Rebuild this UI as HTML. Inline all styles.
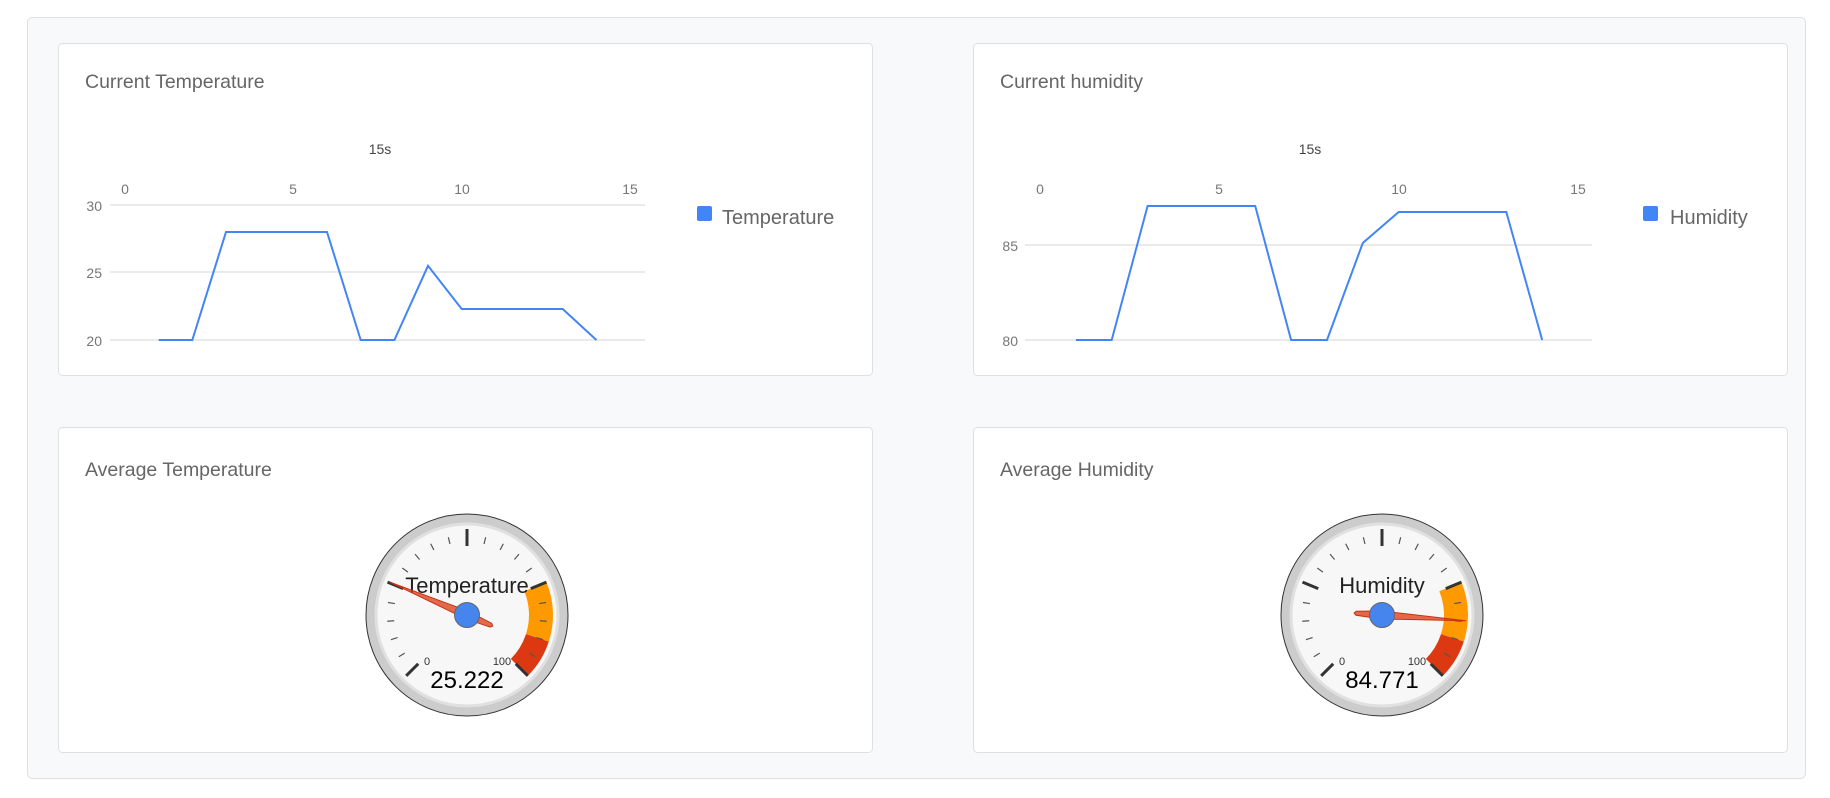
<!DOCTYPE html>
<html><head><meta charset="utf-8"><style>
html,body{margin:0;padding:0;background:#fff;width:1830px;height:798px;overflow:hidden}
svg text{font-family:"Liberation Sans",sans-serif}
</style></head><body>
<svg width="1830" height="798" viewBox="0 0 1830 798" xmlns="http://www.w3.org/2000/svg">
<defs>
<g id="gauge">
  <circle r="101" fill="#cccccc" stroke="#333" stroke-width="1"/>
  <circle r="91" fill="#f7f7f7" stroke="#e0e0e0" stroke-width="3"/>
  <path d="M79.45,-32.91 A86,86 0 0 1 81.79,26.57 L58.97,19.16 A62,62 0 0 0 57.28,-23.73 Z" fill="#ff9900"/>
  <path d="M81.79,26.57 A86,86 0 0 1 60.81,60.81 L43.84,43.84 A62,62 0 0 0 58.97,19.16 Z" fill="#dc3912"/>
  <g stroke="#333" stroke-width="3">
    <line y1="-86" y2="-69" transform="rotate(-135)"/>
    <line y1="-86" y2="-69" transform="rotate(-67.5)"/>
    <line y1="-86" y2="-69"/>
    <line y1="-86" y2="-69" transform="rotate(67.5)"/>
    <line y1="-86" y2="-69" transform="rotate(135)"/>
  </g>
  <g stroke="#555" stroke-width="1.2">
    <line y1="-80" y2="-73" transform="rotate(-121.5)"/>
    <line y1="-80" y2="-73" transform="rotate(-108)"/>
    <line y1="-80" y2="-73" transform="rotate(-94.5)"/>
    <line y1="-80" y2="-73" transform="rotate(-81)"/>
    <line y1="-80" y2="-73" transform="rotate(-54)"/>
    <line y1="-80" y2="-73" transform="rotate(-40.5)"/>
    <line y1="-80" y2="-73" transform="rotate(-27)"/>
    <line y1="-80" y2="-73" transform="rotate(-13.5)"/>
    <line y1="-80" y2="-73" transform="rotate(13.5)"/>
    <line y1="-80" y2="-73" transform="rotate(27)"/>
    <line y1="-80" y2="-73" transform="rotate(40.5)"/>
    <line y1="-80" y2="-73" transform="rotate(54)"/>
    <line y1="-80" y2="-73" transform="rotate(81)"/>
    <line y1="-80" y2="-73" transform="rotate(94.5)"/>
    <line y1="-80" y2="-73" transform="rotate(108)"/>
    <line y1="-80" y2="-73" transform="rotate(121.5)"/>
  </g>
  <text x="-40" y="50" font-size="11" fill="#333" text-anchor="middle">0</text>
  <text x="35" y="50" font-size="11" fill="#333" text-anchor="middle">100</text>
</g>
</defs>

<rect x="27.5" y="17.5" width="1778" height="761" rx="5" fill="#f8f9fa" stroke="#e0e0e0"/>
<rect x="58.5" y="43.5" width="814" height="332" rx="4" fill="#fff" stroke="#e0e0e0"/>
<rect x="973.5" y="43.5" width="814" height="332" rx="4" fill="#fff" stroke="#e0e0e0"/>
<rect x="58.5" y="427.5" width="814" height="325" rx="4" fill="#fff" stroke="#e0e0e0"/>
<rect x="973.5" y="427.5" width="814" height="325" rx="4" fill="#fff" stroke="#e0e0e0"/>

<g font-size="19.5" fill="#666">
<text x="85" y="88">Current Temperature</text>
<text x="1000" y="88">Current humidity</text>
<text x="85" y="476">Average Temperature</text>
<text x="1000" y="476">Average Humidity</text>
</g>

<!-- Temperature chart -->
<g stroke="#e3e3e3" stroke-width="1.5">
<line x1="110" y1="205" x2="645" y2="205"/>
<line x1="110" y1="272" x2="645" y2="272"/>
<line x1="110" y1="340" x2="645" y2="340"/>
</g>
<g font-size="14" fill="#777" text-anchor="middle">
<text x="380" y="154" fill="#444">15s</text>
<text x="125" y="194">0</text><text x="293" y="194">5</text><text x="462" y="194">10</text><text x="630" y="194">15</text>
</g>
<g font-size="14" fill="#777" text-anchor="end">
<text x="102" y="211">30</text><text x="102" y="278">25</text><text x="102" y="346">20</text>
</g>
<polyline fill="none" stroke="#4285f4" stroke-width="2" points="158.7,340 192.3,340 226,232 327,232 360.7,340 394.4,340 428,265.8 461.7,309 562.7,309 596.4,340"/>
<rect x="697" y="206" width="15" height="15" rx="2" fill="#4285f4"/>
<text x="722" y="224" font-size="20" fill="#666">Temperature</text>

<!-- Humidity chart -->
<g stroke="#e3e3e3" stroke-width="1.5">
<line x1="1025" y1="245" x2="1592" y2="245"/>
<line x1="1025" y1="340" x2="1592" y2="340"/>
</g>
<g font-size="14" fill="#777" text-anchor="middle">
<text x="1310" y="154" fill="#444">15s</text>
<text x="1040" y="194">0</text><text x="1219" y="194">5</text><text x="1399" y="194">10</text><text x="1578" y="194">15</text>
</g>
<g font-size="14" fill="#777" text-anchor="end">
<text x="1018" y="251">85</text><text x="1018" y="346">80</text>
</g>
<polyline fill="none" stroke="#4285f4" stroke-width="2" points="1075.9,340 1111.7,340 1147.6,206 1255.2,206 1291.1,340 1327,340 1362.8,243 1398.7,212 1506.3,212 1542.2,340"/>
<rect x="1643" y="206" width="15" height="15" rx="2" fill="#4285f4"/>
<text x="1670" y="224" font-size="20" fill="#666">Humidity</text>

<!-- Gauges -->
<g transform="translate(467,615)">
  <use href="#gauge"/>
  <text x="0" y="-22" font-size="22" fill="#222" text-anchor="middle">Temperature</text>
  <text x="0" y="73" font-size="24" fill="#000" text-anchor="middle">25.222</text>
  <g transform="rotate(-66.9)">
    <polygon points="0,-84 4,0 2,26 0,28 -2,26 -4,0" fill="#dc3912" fill-opacity="0.75" stroke="#c63310" stroke-width="1"/>
  </g>
  <circle r="12.5" fill="#4684ee" stroke="#666" stroke-width="1"/>
</g>
<g transform="translate(1382,615)">
  <use href="#gauge"/>
  <text x="0" y="-22" font-size="22" fill="#222" text-anchor="middle">Humidity</text>
  <text x="0" y="73" font-size="24" fill="#000" text-anchor="middle">84.771</text>
  <g transform="rotate(93.9)">
    <polygon points="0,-84 4,0 2,26 0,28 -2,26 -4,0" fill="#dc3912" fill-opacity="0.75" stroke="#c63310" stroke-width="1"/>
  </g>
  <circle r="12.5" fill="#4684ee" stroke="#666" stroke-width="1"/>
</g>
</svg>
</body></html>
